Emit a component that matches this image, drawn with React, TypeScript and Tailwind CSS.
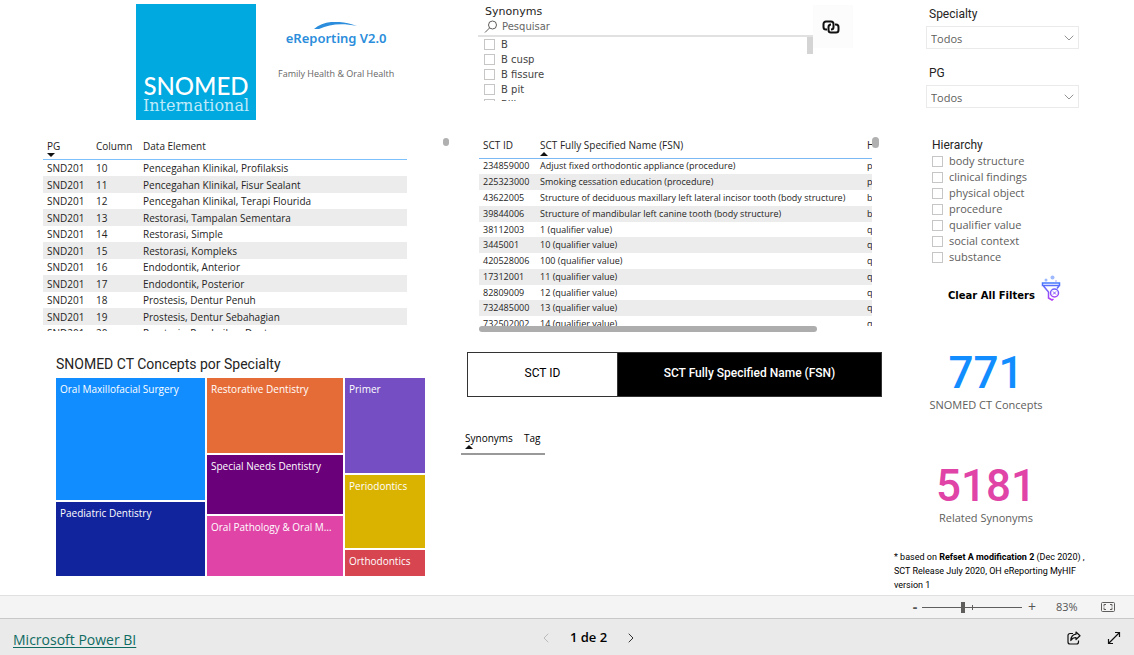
import { ChevronDown, ChevronLeft, ChevronRight } from "lucide-react";

const elements = [
  ["SND201", "10", "Pencegahan Klinikal, Profilaksis"],
  ["SND201", "11", "Pencegahan Klinikal, Fisur Sealant"],
  ["SND201", "12", "Pencegahan Klinikal, Terapi Flourida"],
  ["SND201", "13", "Restorasi, Tampalan Sementara"],
  ["SND201", "14", "Restorasi, Simple"],
  ["SND201", "15", "Restorasi, Kompleks"],
  ["SND201", "16", "Endodontik, Anterior"],
  ["SND201", "17", "Endodontik, Posterior"],
  ["SND201", "18", "Prostesis, Dentur Penuh"],
  ["SND201", "19", "Prostesis, Dentur Sebahagian"],
  ["SND201", "20", "Prostesis, Pembaikan Dentur"],
];

const concepts = [
  ["234859000", "Adjust fixed orthodontic appliance (procedure)", "procedure"],
  ["225323000", "Smoking cessation education (procedure)", "procedure"],
  ["43622005", "Structure of deciduous maxillary left lateral incisor tooth (body structure)", "body structure"],
  ["39844006", "Structure of mandibular left canine tooth (body structure)", "body structure"],
  ["38112003", "1 (qualifier value)", "qualifier value"],
  ["3445001", "10 (qualifier value)", "qualifier value"],
  ["420528006", "100 (qualifier value)", "qualifier value"],
  ["17312001", "11 (qualifier value)", "qualifier value"],
  ["82809009", "12 (qualifier value)", "qualifier value"],
  ["732485000", "13 (qualifier value)", "qualifier value"],
  ["732502002", "14 (qualifier value)", "qualifier value"],
];

const treemap = [
  {
    rows: "grid-rows-[123fr_75fr]",
    tiles: [
      { name: "Oral Maxillofacial Surgery", color: "bg-[#118dff]" },
      { name: "Paediatric Dentistry", color: "bg-[#12239e]" },
    ],
  },
  {
    rows: "grid-rows-[75fr_60fr_60fr]",
    tiles: [
      { name: "Restorative Dentistry", color: "bg-[#e66c37]" },
      { name: "Special Needs Dentistry", color: "bg-[#6b007b]" },
      { name: "Oral Pathology & Oral Medicine", color: "bg-[#e044a7]" },
    ],
  },
  {
    rows: "grid-rows-[96fr_74fr_26fr]",
    tiles: [
      { name: "Primer", color: "bg-[#744ec2]" },
      { name: "Periodontics", color: "bg-[#d9b300]" },
      { name: "Orthodontics", color: "bg-[#d64550]" },
    ],
  },
];

const synonyms = ["B", "B cusp", "B fissure", "B pit", "Bili"];
const hierarchy = [
  "body structure",
  "clinical findings",
  "physical object",
  "procedure",
  "qualifier value",
  "social context",
  "substance",
];

const segoe = "font-['Open_Sans','Noto_Sans',sans-serif]";
const din = "font-['Roboto',sans-serif]";
const verdana = "font-['DejaVu_Sans',sans-serif]";

function SortArrow({ up = false }: { up?: boolean }) {
  return (
    <svg viewBox="0 0 8 4" className="block h-1 w-2" aria-hidden="true">
      <path d={up ? "M0 4 4 0l4 4z" : "M0 0l4 4 4-4z"} fill="#111" />
    </svg>
  );
}

function Brand() {
  return (
    <header className="flex gap-[22px] pt-1 pl-[136px]">
      <div className="flex h-[116px] w-[120px] shrink-0 flex-col items-center justify-end bg-[#00a9e0] pb-1 text-white">
        <span className="font-['Lato',sans-serif] text-[24px] leading-5 font-medium">SNOMED</span>
        <span className="font-['DejaVu_Serif',serif] text-[16px] leading-5 text-[#bfeafa]">International</span>
      </div>
      <div className="flex flex-col items-center pt-[18px]">
        <svg viewBox="0 0 44 8" className="block h-2 w-11" aria-hidden="true">
          <path d="M0 7C10-2 26-2 43 4 28 1 16 2 5 7z" fill="#2b8ddb" />
        </svg>
        <h1 className="font-['Noto_Sans',sans-serif] text-[13px] leading-4 font-semibold text-[#2b8ddb]">
          eReporting V2.0
        </h1>
        <p className={`${segoe} mt-5 text-[9px] leading-4 text-[#666]`}>Family Health &amp; Oral Health</p>
      </div>
    </header>
  );
}

function ElementsTable() {
  return (
    <section className="mt-4 flex justify-between pr-[6px] pl-[43px]">
      <div className="h-[195px] w-[364px] overflow-hidden">
        <table className={`${segoe} w-full table-fixed border-collapse text-[10px] leading-[14px] text-[#252423]`}>
          <colgroup>
            <col className="w-[49px]" />
            <col className="w-[47px]" />
            <col />
          </colgroup>
          <thead>
            <tr className="h-[23px] border-b border-[#7cc1fb] text-left align-top">
              <th className="p-0 pt-[3px] pl-1 font-normal">
                PG
                <SortArrow />
              </th>
              <th className="p-0 pt-[3px] pl-1 font-normal">Column</th>
              <th className="p-0 pt-[3px] pl-1 font-normal">Data Element</th>
            </tr>
          </thead>
          <tbody>
            {elements.map(([pg, column, name], i) => (
              <tr key={column} className={i % 2 ? "h-[17px] bg-[#ececec]" : i === 0 ? "h-[17px]" : "h-[16px]"}>
                <td className="p-0 pl-1">{pg}</td>
                <td className="p-0 pl-1">{column}</td>
                <td className="p-0 pl-1 whitespace-nowrap">{name}</td>
              </tr>
            ))}
          </tbody>
        </table>
      </div>
      <div className="mt-[2px] h-2 w-[6px] rounded-full bg-[#b0b0b0]" />
    </section>
  );
}

function Treemap() {
  return (
    <section className="mt-6 pr-[30px] pl-[56px]">
      <h2 className={`${din} text-[14px] leading-[18px] text-[#252423]`}>SNOMED CT Concepts por Specialty</h2>
      <div className="mt-[5px] grid h-[198px] grid-cols-[149fr_136fr_80fr] gap-[2px]">
        {treemap.map((column) => (
          <div key={column.rows} className={`grid min-w-0 gap-[2px] ${column.rows}`}>
            {column.tiles.map((tile) => (
              <div
                key={tile.name}
                className={`${segoe} ${tile.color} min-w-0 truncate pt-[3px] pr-2 pl-1 text-[10px] leading-4 font-medium text-white`}
              >
                {tile.name}
              </div>
            ))}
          </div>
        ))}
      </div>
    </section>
  );
}

function CheckList({ items, rowClass }: { items: string[]; rowClass: string }) {
  return (
    <ul>
      {items.map((item) => (
        <li key={item}>
          <label className={`flex items-center ${rowClass}`}>
            <input type="checkbox" className="size-[11px] shrink-0 appearance-none border border-[#c8c6c4] bg-white" />
            {item}
          </label>
        </li>
      ))}
    </ul>
  );
}

function SynonymSlicer() {
  return (
    <section className="flex h-[102px] pl-[17px]">
      <div className={`${verdana} w-[335px] overflow-hidden pt-[5px]`}>
        <h2 className="pl-[7px] text-[11px] leading-[14px] text-[#252423]">Synonyms</h2>
        <label className="flex h-[18px] items-center gap-1 border-b-2 border-[#e1e1e1] pl-[6px]">
          <svg viewBox="0 0 14 14" className="size-[14px]" fill="none" stroke="#605e5c" aria-hidden="true">
            <circle cx="8.5" cy="5" r="4" />
            <path d="M5.5 8 1 12.5" />
          </svg>
          <input
            type="text"
            aria-label="Pesquisar"
            placeholder="Pesquisar"
            className="min-w-0 flex-1 text-[10px] leading-[14px] outline-none placeholder:text-[#666]"
          />
        </label>
        <div className="flex h-[64px] items-start justify-between overflow-hidden">
          <div className="pl-[6px]">
            <CheckList items={synonyms} rowClass="h-[15px] gap-[6px] text-[10px] text-[#444]" />
          </div>
          <div className="h-[17px] w-[6px] bg-[#d4d4d4]" />
        </div>
      </div>
      <button
        type="button"
        aria-label="Link"
        className="mt-[5px] flex h-[43px] w-10 items-center bg-[#fcfcfc] pl-[9px]"
      >
        <svg viewBox="0 0 18 14" className="h-[14px] w-[18px]" fill="none" stroke="#111" strokeWidth="2" aria-hidden="true">
          <path d="M5 9.500H4A2.500 2.500 0 0 1 1.500 7V4A2.500 2.500 0 0 1 4 1.500h5A2.500 2.500 0 0 1 11.500 4v3A2.500 2.500 0 0 1 9 9.500" />
          <path d="M13 4.500h1A2.500 2.500 0 0 1 16.500 7v3a2.500 2.500 0 0 1-2.500 2.500H9A2.500 2.500 0 0 1 6.500 10V7A2.500 2.500 0 0 1 9 4.500" />
        </svg>
      </button>
    </section>
  );
}

function ConceptsTable() {
  return (
    <section className="mt-[35px] pl-[18px]">
      <div className="flex">
        <div className="h-[189px] w-[393px] overflow-hidden">
          <table className={`${segoe} w-[460px] table-fixed border-collapse text-[9px] leading-[14px] text-[#252423]`}>
            <colgroup>
              <col className="w-[57px]" />
              <col className="w-[327px]" />
              <col />
            </colgroup>
            <thead>
              <tr className="h-[21px] border-b border-[#7cb8f5] text-left align-top text-[10px]">
                <th className="p-0 pt-px pl-1 font-normal">SCT ID</th>
                <th className="p-0 pt-px pl-1 font-normal">
                  SCT Fully Specified Name (FSN)
                  <SortArrow up />
                </th>
                <th className="p-0 pt-px pl-1 font-normal">Hierarchy</th>
              </tr>
            </thead>
            <tbody>
              {concepts.map(([id, name, kind], i) => (
                <tr key={id} className={`${i % 4 === 0 && i > 0 ? "h-[15px]" : "h-[16px]"} ${i % 2 ? "bg-[#ececec]" : ""}`}>
                  <td className="p-0 pl-1">{id}</td>
                  <td className="p-0 pl-1 whitespace-nowrap">{name}</td>
                  <td className="p-0 pl-1 whitespace-nowrap">{kind}</td>
                </tr>
              ))}
            </tbody>
          </table>
        </div>
        <div className="h-[11px] w-[7px] rounded-full bg-[#b0b0b0]" />
      </div>
      <div className="h-[6px] w-[338px] rounded-full bg-[#adadad]" />
    </section>
  );
}

function FieldSwitch() {
  return (
    <div className={`${din} mt-5 mr-2 ml-[6px] flex h-[45px] border border-[#333] text-[12px]`}>
      <button type="button" className="w-[150px] border-r border-[#333] bg-white pb-[3px] text-black">
        SCT ID
      </button>
      <button type="button" className="flex-1 bg-black pb-[3px] font-medium text-white">
        SCT Fully Specified Name (FSN)
      </button>
    </div>
  );
}

function SynonymTable() {
  return (
    <table className={`${segoe} mt-[34px] border-collapse text-[10px] leading-[14px] text-black`}>
      <thead>
        <tr className="h-[23px] border-b-2 border-[#999] text-left align-top">
          <th className="w-[59px] p-0 pl-1 font-normal">
            Synonyms
            <SortArrow up />
          </th>
          <th className="w-[25px] p-0 pl-1 font-normal">Tag</th>
        </tr>
      </thead>
    </table>
  );
}

function Dropdown({ id, label }: { id: string; label: string }) {
  return (
    <div className="w-[153px]">
      <label htmlFor={id} className={`${din} block pl-[3px] text-[12px] leading-4 text-[#252423]`}>
        {label}
      </label>
      <div className="mt-1 grid items-center">
        <select
          id={id}
          className={`${segoe} col-start-1 row-start-1 h-[23px] w-full appearance-none border border-[#eaeaea] bg-white px-1 pt-[3px] text-[11px] text-[#605e5c]`}
        >
          <option>Todos</option>
        </select>
        <ChevronDown
          className="pointer-events-none col-start-1 row-start-1 mr-[2px] size-4 justify-self-end text-[#605e5c]"
          strokeWidth={1}
          aria-hidden="true"
        />
      </div>
    </div>
  );
}

function ClearFilters() {
  return (
    <button type="button" className={`${verdana} mt-[10px] ml-[58px] flex h-[26px] items-end gap-[6px] text-[10px] font-bold text-black`}>
      <span className="leading-[10px]">Clear All Filters</span>
      <svg viewBox="0 0 20 26" className="h-[26px] w-5" fill="none" strokeWidth="1.500" aria-hidden="true">
        <defs>
          <linearGradient id="funnel" x1="0" y1="7" x2="0" y2="25" gradientUnits="userSpaceOnUse">
            <stop stopColor="#3f7bff" />
            <stop offset="1" stopColor="#b63cf5" />
          </linearGradient>
        </defs>
        <circle cx="5" cy="5" r="1.500" fill="#9fb9ff" />
        <circle cx="11.500" cy="2.500" r="2" fill="#9fb9ff" />
        <circle cx="15" cy="6" r="1" fill="#c9c4ff" />
        <g stroke="url(#funnel)">
          <path d="M1.500 8h17v2.500h-17zM2.500 11l5 6v6l3.500 2 1.500-1M18 11l-2 2.500" />
          <circle cx="13.500" cy="18" r="4" />
          <path d="m12 16.500 3 3m0-3-3 3" strokeWidth="1" />
        </g>
      </svg>
    </button>
  );
}

function Card({ value, label, color }: { value: string; label: string; color: string }) {
  return (
    <div className="flex w-[192px] flex-col items-center">
      <strong className={`${din} ${color} text-[44px] leading-[48px] font-medium`}>{value}</strong>
      <span className={`${segoe} text-[11px] leading-4 text-[#605e5c]`}>{label}</span>
    </div>
  );
}

function Filters() {
  return (
    <aside className="pt-[6px]">
      <div className="flex flex-col gap-4 pl-9">
        <Dropdown id="specialty" label="Specialty" />
        <Dropdown id="pg" label="PG" />
      </div>
      <fieldset className="mt-[29px] pl-[42px]">
        <legend className={`${din} text-[12px] leading-4 text-[#252423]`}>Hierarchy</legend>
        <div className={segoe}>
          <CheckList items={hierarchy} rowClass="h-[16px] gap-[6px] text-[11px] text-[#605e5c]" />
        </div>
      </fieldset>
      <ClearFilters />
      <div className="mt-12 flex flex-col gap-[49px]">
        <Card value="771" label="SNOMED CT Concepts" color="text-[#118dff]" />
        <Card value="5181" label="Related Synonyms" color="text-[#e044a7]" />
      </div>
      <p className={`${din} mt-6 ml-1 w-[200px] text-[9px] leading-[14px] text-black`}>
        * based on <b className="font-bold">Refset A modification 2</b> (Dec 2020) , SCT Release July 2020, OH
        eReporting MyHIF version 1
      </p>
    </aside>
  );
}

function ZoomBar() {
  return (
    <div className={`${segoe} flex h-[23px] items-center justify-end border-t border-[#e0e0e0] bg-[#f4f4f4] pr-[19px] text-[#555]`}>
      <button type="button" aria-label="-" className="w-[14px] text-[14px] leading-4 font-bold">
        -
      </button>
      <div className="grid w-[100px] items-center">
        <div className="col-start-1 row-start-1 ml-[50px] h-[5px] w-px bg-[#605e5c]" />
        <input
          type="range"
          aria-label="Zoom"
          min={0}
          max={100}
          defaultValue={41}
          className="col-start-1 row-start-1 h-[11px] w-full appearance-none bg-[linear-gradient(#605e5c,#605e5c)] bg-[length:100%_1px] bg-center bg-no-repeat [&::-webkit-slider-thumb]:h-[11px] [&::-webkit-slider-thumb]:w-1 [&::-webkit-slider-thumb]:appearance-none [&::-webkit-slider-thumb]:bg-[#605e5c]"
        />
      </div>
      <button type="button" aria-label="+" className="w-5 text-[14px] leading-4">
        +
      </button>
      <span className="ml-[14px] w-[31px] text-[11px]">83%</span>
      <button type="button" aria-label="Fit to page" className="ml-[14px]">
        <svg viewBox="0 0 14 10" className="block h-[10px] w-[14px]" fill="none" stroke="#605e5c" aria-hidden="true">
          <rect x=".5" y=".5" width="13" height="9" rx="1" />
          <path d="M3 4.500v-2h2M9 2.500h2v2M11 5.500v2H9M5 7.500H3v-2" />
        </svg>
      </button>
    </div>
  );
}

function PageBar() {
  return (
    <footer
      className={`${segoe} grid h-[37px] grid-cols-[1fr_auto_1fr] items-center border-t border-[#c8c8c8] bg-[#eaeaea] px-[13px]`}
    >
      <a href="#powerbi" className="justify-self-start pt-1 text-[14px] text-[#0f6b62] underline underline-offset-2">
        Microsoft Power BI
      </a>
      <nav className="flex items-center gap-4 pt-[2px] pl-[43px]" aria-label="Pages">
        <button type="button" aria-label="Previous page" disabled className="text-[#bbb]">
          <ChevronLeft className="size-4" strokeWidth={1.5} />
        </button>
        <span className="text-[13px] font-semibold text-black">1 de 2</span>
        <button type="button" aria-label="Next page" className="text-[#333]">
          <ChevronRight className="size-4" strokeWidth={1.5} />
        </button>
      </nav>
      <div className="flex items-center gap-[26px] justify-self-end pt-[2px]">
        <button type="button" aria-label="Share">
          <svg viewBox="0 0 14 14" className="block size-[14px]" fill="none" stroke="#111" strokeWidth="1.200" aria-hidden="true">
            <path d="M6 2.500H3a2 2 0 0 0-2 2V11a2 2 0 0 0 2 2h6.500a2 2 0 0 0 2-2v-1.500" />
            <path d="M9 1l4 3.800L9 8.500V6.500C6.500 6.500 5 7.500 3.800 9.500 4 6 6 3.500 9 3.200z" strokeLinejoin="round" />
          </svg>
        </button>
        <button type="button" aria-label="Full screen">
          <svg viewBox="0 0 14 14" className="block size-[14px]" fill="none" stroke="#111" strokeWidth="1.200" aria-hidden="true">
            <path d="M1.500 12.500l11-11M8 1.500h4.500V6M1.500 8v4.500H6" />
          </svg>
        </button>
      </div>
    </footer>
  );
}

export default function App() {
  return (
    <div className="flex min-h-screen flex-col bg-white">
      <main className="grid flex-1 grid-cols-[455fr_435fr_244fr]">
        <div className="min-w-0">
          <Brand />
          <ElementsTable />
          <Treemap />
        </div>
        <div className="min-w-0 pl-[6px]">
          <SynonymSlicer />
          <ConceptsTable />
          <FieldSwitch />
          <SynonymTable />
        </div>
        <Filters />
      </main>
      <ZoomBar />
      <PageBar />
    </div>
  );
}
